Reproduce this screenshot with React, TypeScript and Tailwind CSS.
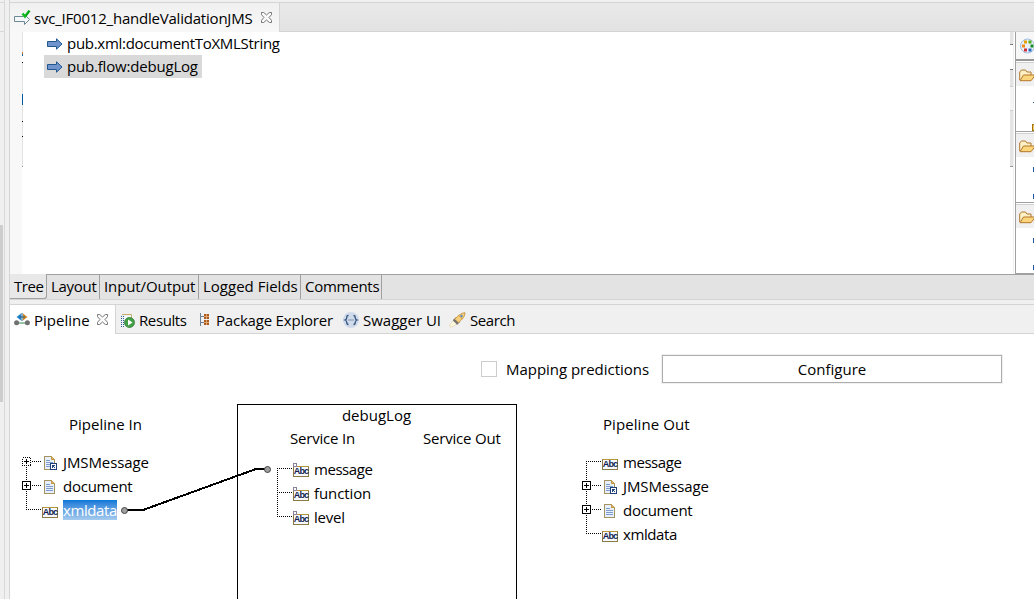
import type { ReactNode } from "react";

function Close() {
  return (
    <svg width="11" height="11" viewBox="0 0 11 11" fill="#fafafa" stroke="#777" strokeWidth="1">
      <path d="M.5 .5h2.2L5.5 3 8.300 .5h2.200v2.200L8 5.500l2.500 2.800v2.200H8.300L5.500 8l-2.800 2.500H.5V8.300L3 5.500.5 2.700z" />
    </svg>
  );
}

function ServiceIcon() {
  return (
    <svg width="17" height="16" viewBox="0 0 17 16">
      <path d="M.5 6.500h9V3.500l6 6-5 5V11.500H.5z" fill="#f4f8fa" stroke="#6f8794" />
      <path d="M8.500 3.500l2.500 3 4.500-6" fill="none" stroke="#0cbf1d" strokeWidth="2.400" />
      <path d="M12 6l3.500-5" stroke="#087a12" strokeWidth=".8" />
    </svg>
  );
}

function Arrow() {
  return (
    <svg width="16" height="12" viewBox="0 0 16 12">
      <path d="M.5 3.500h9V.8L15 6l-5.500 5.200V8.500h-9z" fill="#6f95cc" stroke="#23588f" />
    </svg>
  );
}

function PipelineIcon() {
  return (
    <svg width="16" height="13" viewBox="0 0 16 13">
      <path d="M3 10h10" stroke="#2f8a4b" />
      <path d="M2.500 4L7 .5v7z" fill="#2388cf" />
      <path d="M13.500 4L9 .5v7z" fill="#d38a24" />
      <path d="M8 0v8M5 4h6" stroke="#1c5d8c" />
      <circle cx="2.600" cy="9.800" r="2.500" fill="#707070" />
      <circle cx="13.400" cy="9.800" r="2.500" fill="#707070" />
    </svg>
  );
}

function ResultsIcon() {
  return (
    <svg width="15" height="15" viewBox="0 0 15 15">
      <path d="M2 1.500h9.500v4" fill="none" stroke="#c9ad6c" />
      <path d="M3 3h8v10H3z" fill="#f5f8fc" />
      <path d="M1.500 3v11M3.500 3v11" stroke="#2f5d94" strokeDasharray="1 1" />
      <circle cx="9.500" cy="9.500" r="5" fill="#43a047" stroke="#2d7d32" strokeWidth=".8" />
      <path d="M8 6.500v6l4.500-3z" fill="#fff" />
    </svg>
  );
}

function PackageIcon() {
  return (
    <svg width="10" height="13" viewBox="0 0 10 13" shapeRendering="crispEdges">
      <path d="M.5 0v13M1 3.500h3M1 9.500h3" stroke="#6b7f95" />
      <path d="M4 1h5v5H4zM4 7h5v5H4z" fill="#a85a22" />
      <path d="M6.500 1v5M4 3.500h5M6.500 7v5M4 9.500h5" stroke="#e2a36d" />
    </svg>
  );
}

function SwaggerIcon() {
  return (
    <svg width="16" height="16" viewBox="0 0 16 16">
      <circle cx="8" cy="8" r="8" fill="#cfdaea" />
      <path d="M5.500 3.500c-1.500 0-1.700.6-1.700 2S3.500 7.500 2 8c1.500.5 1.800 1.100 1.800 2.500s.2 2 1.700 2M10.500 3.500c1.500 0 1.700.6 1.700 2s.3 2 1.800 2.500c-1.500.5-1.800 1.100-1.800 2.500s-.2 2-1.700 2" fill="none" stroke="#31517d" strokeWidth="1.300" />
      <path d="M5.500 8h1M7.500 8h1M9.500 8h1" stroke="#31517d" strokeWidth="1.200" />
    </svg>
  );
}

function RocketIcon() {
  return (
    <svg width="17" height="16" viewBox="0 0 17 16">
      <path d="M4 8l3-3 3 1 1 4-3 3z" fill="#8a807a" />
      <path d="M5.500 7.500C9 3.500 12 1 16 .7c0 3.500-2 6-6.500 10z" fill="#f5cf79" stroke="#c08a35" strokeWidth=".8" />
      <path d="M10 3.500l3.500 3.500" stroke="#b87b30" strokeWidth=".7" />
      <circle cx="12.500" cy="4" r="1.200" fill="#5c8bc4" />
      <path d="M5 8l-4 4.500v2.500l3-.5 4-3z" fill="#fffbe0" stroke="#e3cf9a" strokeWidth=".6" />
      <path d="M3.800 8.500L5.500 7l4 4-1.500 1.500z" fill="#77706e" />
    </svg>
  );
}

function PaletteIcon() {
  return (
    <svg width="14" height="16" viewBox="0 0 14 16" className="shrink-0">
      <circle cx="7.500" cy="8" r="7" fill="#eaf1fb" stroke="#9fbbe0" />
      <path d="M4 2.500h3v3H4z" fill="#e3a000" />
      <path d="M8.500 2.500h3v3h-3z" fill="#54ab15" />
      <path d="M2 6.500h3v3H2z" fill="#ee8a17" />
      <path d="M10.500 6.500h3v3h-3z" fill="#178b25" />
      <path d="M4 10.500h3v3H4z" fill="#cf2f35" />
      <path d="M8.500 10.500h3v3h-3z" fill="#2868bc" />
    </svg>
  );
}

function Folder() {
  return (
    <svg width="15" height="13" viewBox="0 0 15 13" className="shrink-0">
      <path d="M.7 11V3L2.500 1h4L8 3h4v3" fill="#fdf0c6" stroke="#b3772b" />
      <path d="M1 11.700L4.500 6h12L12 11.700z" fill="#fad57c" stroke="#b3772b" />
    </svg>
  );
}

function DocIcon({ link = false }: { link?: boolean }) {
  return (
    <svg width="16" height="16" viewBox="0 0 16 16" shapeRendering="crispEdges">
      <path d="M2.500 1.500h7l3 3v10h-10z" fill="#e6effb" stroke="#a3935c" />
      <path d="M9.500 1.500v3h3z" fill="#e0b866" stroke="#c29b4d" />
      <path d="M4 5.500h4M4 7.500h7M4 9.500h7M4 11.500h7" stroke="#7f9bcb" />
      {link && (
        <>
          <path d="M8.500 8.500h6v6h-6z" fill="#fff" stroke="#1f4177" />
          <path d="M10 13v-3h3M10 10l3 3" fill="none" stroke="#1f4177" />
        </>
      )}
    </svg>
  );
}

function StringIcon({ optional = false }: { optional?: boolean }) {
  return (
    <span className="relative flex h-[11px] w-4 items-center justify-center border border-[#8b7a45] border-t-[#b8963e] bg-[#f6f9ff] font-['Liberation_Sans',sans-serif] text-[9px] leading-[9px] font-bold tracking-[-0.8px] text-[#101c50]">
      Abc
      {optional && <span className="absolute -top-1 -left-px size-1 border border-[#8d7fa0] bg-white" />}
    </span>
  );
}

type Item = { name: string; kind: "str" | "opt" | "doc" | "ref"; box?: "dotted" | "solid"; selected?: boolean; text: string };

function Tree({ items }: { items: Item[] }) {
  return (
    <div className="flex flex-col">
      {items.map((item, i) => {
        const first = i === 0;
        const last = i === items.length - 1;
        return (
          <div key={item.name} className="flex h-6 items-center">
            <svg width="20" height="24" viewBox="0 0 20 24" shapeRendering="crispEdges" className="shrink-0">
              <path d={`M4.500 ${first ? 12 : 0}V${last ? 12 : 24}`} stroke="#000" strokeDasharray="1 1" />
              <path d="M4 12.500h16" stroke="#000" strokeDasharray="1 1" />
              {item.box && (
                <>
                  <path d="M.5 8.500h8v8h-8z" fill="#fff" stroke="#000" strokeDasharray={item.box === "dotted" ? "1 1" : undefined} />
                  <path d="M2 12.500h5M4.500 10v5" stroke="#000" />
                </>
              )}
            </svg>
            <span className={item.kind === "doc" || item.kind === "ref" ? "flex w-[21px] pt-[3px]" : "flex w-[21px] pt-[7px]"}>
              {item.kind === "doc" && <DocIcon />}
              {item.kind === "ref" && <DocIcon link />}
              {item.kind === "str" && <StringIcon />}
              {item.kind === "opt" && <StringIcon optional />}
            </span>
            <span className={item.selected ? "mt-0.5 h-5 bg-linear-to-b from-[#0078d7] to-[#a5cbee] leading-5 text-white" : "mt-0.5 h-5 leading-5"}>
              <span className={item.text}>{item.name}</span>
            </span>
          </div>
        );
      })}
    </div>
  );
}

function PaletteGroup({ children }: { children?: ReactNode }) {
  return (
    <div className="h-[71px] pt-px">
      <div className="flex h-[24px] items-center border-t border-[#d0d0d0] bg-[#f0f0f0] pt-0.5 pl-[3px]">
        <Folder />
      </div>
      <div className="flex h-[46px] flex-col items-end border-b border-[#a0a0a0]">{children}</div>
    </div>
  );
}

function Marks() {
  return (
    <>
      <span className="mt-[10px] h-[5px] w-px bg-[#1f5aa0]" />
      <span className="mt-[22px] h-[5px] w-px bg-[#1f5aa0]" />
    </>
  );
}

const footerTabs = [
  { name: "Layout", box: "w-[53px] pl-1", text: "tracking-[-0.3px]" },
  { name: "Input/Output", box: "w-[99px] pl-1", text: "tracking-[-0.1px]" },
  { name: "Logged Fields", box: "w-[102px] pl-1", text: "tracking-[0px]" },
  { name: "Comments", box: "w-[81px] pl-1", text: "tracking-[-0.25px]" },
];

export default function App() {
  return (
    <div className="flex h-[599px] w-[1034px] overflow-hidden bg-[#f0f0f0] font-['Open_Sans',sans-serif] text-[15px] leading-5 whitespace-nowrap text-black">
      <aside className="flex w-[5px] shrink-0 flex-col border-r border-[#d8d8d8]">
        <div className="mt-0.5 h-[30px] border-y border-[#d8d8d8]" />
        <div className="mt-[193px] h-[177px] w-[3px] bg-[#cdcdcd]" />
      </aside>
      <main className="ml-1 flex w-[1025px] shrink-0 flex-col border-l border-[#d4d4d4] pt-0.5">
        <div className="flex h-[30px] shrink-0 border-t border-[#d4d4d4]">
          <div className="flex w-[270px] items-center border-r border-[#d4d4d4] bg-linear-to-b from-[#f0f0f0] to-[#f8f8f8] pl-1">
            <ServiceIcon />
            <span className="ml-[3px] w-[227px]"><span className="tracking-[-0.21px]">svc_IF0012_handleValidationJMS</span></span>
            <Close />
          </div>
          <div className="flex-1 border-b border-[#d4d4d4] bg-linear-to-b from-[#e9e9e9] to-[#e3e3e3]" />
        </div>

        <section className="flex h-[242px] shrink-0 bg-white">
          <div className="flex w-[13px] flex-col items-end bg-linear-to-r from-[#f8f8f8] from-[12px] to-white to-[12px]">
            <span className="h-[20px] w-px bg-[#e2e2e2]" />
            <span className="h-[2px] w-px bg-[#c57c2e]" />
            <span className="h-[2px] w-px bg-[#1d66a5]" />
            <span className="mt-1.5 h-px w-px bg-black" />
            <span className="h-[31px] w-px bg-[#e2e2e2]" />
            <span className="h-[11px] w-px bg-[#005a9e]" />
            <span className="h-4 w-px bg-[#e2e2e2]" />
            <span className="h-px w-px bg-black" />
            <span className="h-3.5 w-px bg-[#e2e2e2]" />
            <span className="h-px w-px bg-black" />
            <span className="h-[29px] w-px bg-[#e2e2e2]" />
            <span className="h-px w-px bg-[#999]" />
          </div>
          <div className="flex-1 pl-[21px]">
            <div className="flex h-[23px] items-center pl-[3px]">
              <Arrow />
              <span className="ml-1 pb-0.5"><span className="tracking-[-0.29px]">pub.xml:documentToXMLString</span></span>
            </div>
            <div className="flex h-[23px] w-[158px] items-center bg-[#d9d9d9] pl-[3px]">
              <Arrow />
              <span className="ml-1 pb-0.5"><span className="tracking-[-0.19px]">pub.flow:debugLog</span></span>
            </div>
          </div>
          <div className="flex w-[3px] flex-col">
            <span className="h-[13px] border-b border-[#777] bg-[#e4e4e4]" />
            <span className="mt-6 h-[18px] border-y border-t-[#777] border-b-[#ccc] bg-[#e4e4e4]" />
            <span className="h-6 border-b border-[#ccc] bg-[#f5f5f5]" />
            <span className="h-14 border-b border-[#999] bg-[#e4e4e4]" />
          </div>
          <div className="mr-px w-px bg-[#f0f0f0]" />
          <div className="w-[19px] overflow-hidden border-l border-[#a0a0a0]">
            <div className="flex h-[29px] items-center border-b-2 border-[#999] bg-[#f7f7f7] pl-1">
              <PaletteIcon />
            </div>
            <PaletteGroup>
              <span className="mt-4 h-px w-px bg-[#1f5aa0]" />
              <span className="mt-[21px] h-[7px] w-0.5 border border-r-0 border-[#a97308] bg-[#e8c766]" />
            </PaletteGroup>
            <PaletteGroup><Marks /></PaletteGroup>
            <PaletteGroup><Marks /></PaletteGroup>
          </div>
        </section>

        <nav className="flex h-[26px] shrink-0 border-b border-[#d4d4d4] bg-[#e3e3e3]">
          <div className="h-[25px] w-[37px] rounded-br-[3px] border-r border-b border-[#a0a0a0] bg-[#e8e8e8] pt-0.5 pl-1">
            <span className="tracking-[-0.4px]">Tree</span>
          </div>
          {footerTabs.map((tab) => (
            <div key={tab.name} className={`h-[25px] border-t border-r border-[#a0a0a0] pt-px ${tab.box}`}>
              <span className={tab.text}>{tab.name}</span>
            </div>
          ))}
          <div className="flex-1 border-t border-[#a0a0a0]" />
        </nav>

        <div className="mt-1 flex h-[30px] shrink-0 border-t border-[#d4d4d4]">
          <div className="flex w-[105px] items-center bg-white pl-1">
            <PipelineIcon />
            <span className="ml-1 w-[63px] pt-px"><span className="tracking-[0px]">Pipeline</span></span>
            <Close />
          </div>
          <div className="flex flex-1 items-center border-b border-l border-[#d4d4d4] pt-px">
            <span className="ml-1 flex w-[19px] pt-0.5"><ResultsIcon /></span>
            <span className="w-[61px]"><span className="tracking-[-0.4px]">Results</span></span>
            <span className="flex w-4"><PackageIcon /></span>
            <span className="w-[127px]"><span className="tracking-[-0.2px]">Package Explorer</span></span>
            <span className="flex w-5"><SwaggerIcon /></span>
            <span className="w-[86px]"><span className="tracking-[0px]">Swagger UI</span></span>
            <span className="flex w-[21px]"><RocketIcon /></span>
            <span className="tracking-[-0.4px]">Search</span>
          </div>
        </div>

        <section className="relative flex flex-1 flex-col bg-white">
          <div className="flex h-[70px] items-center pl-[471px]">
            <span className="size-[16px] border border-[#ccc] bg-white" />
            <span className="ml-[9px] w-[156px]"><span className="tracking-[-0.03px]">Mapping predictions</span></span>
            <button className="h-[28px] w-[340px] border border-[#adadad] bg-white outline outline-[#f0f0f0]">
              <span className="tracking-[0px]">Configure</span>
            </button>
          </div>
          <div className="flex flex-1">
            <div className="w-[227px] pl-3">
              <div className="mt-[10px] pl-[47px]"><span className="tracking-[0px]">Pipeline In</span></div>
              <div className="mt-[15px]">
                <Tree
                  items={[
                    { name: "JMSMessage", kind: "ref", box: "dotted", text: "tracking-[-0.1px]" },
                    { name: "document", kind: "doc", box: "solid", text: "tracking-[-0.25px]" },
                    { name: "xmldata", kind: "str", selected: true, text: "tracking-[-0.4px]" },
                  ]}
                />
              </div>
            </div>
            <div className="h-[220px] w-[280px] border border-black">
              <div className="h-[23px] pr-px text-center"><span className="tracking-[0px]">debugLog</span></div>
              <div className="flex pl-[52px]">
                <span className="w-[133px]"><span className="tracking-[-0.2px]">Service In</span></span>
                <span className="tracking-[-0.2px]">Service Out</span>
              </div>
              <div className="mt-2 pl-[35px]">
                <Tree
                  items={[
                    { name: "message", kind: "opt", text: "tracking-[-0.45px]" },
                    { name: "function", kind: "opt", text: "tracking-[-0.1px]" },
                    { name: "level", kind: "opt", text: "tracking-[-0.2px]" },
                  ]}
                />
              </div>
            </div>
            <div className="pl-[65px]">
              <div className="mt-[10px] pl-[21px]"><span className="tracking-[0.08px]">Pipeline Out</span></div>
              <div className="mt-[15px]">
                <Tree
                  items={[
                    { name: "message", kind: "str", text: "tracking-[-0.45px]" },
                    { name: "JMSMessage", kind: "ref", box: "solid", text: "tracking-[-0.1px]" },
                    { name: "document", kind: "doc", box: "solid", text: "tracking-[-0.25px]" },
                    { name: "xmldata", kind: "str", text: "tracking-[-0.4px]" },
                  ]}
                />
              </div>
            </div>
          </div>
          <svg width="160" height="60" viewBox="0 0 160 60" className="absolute top-[126px] left-[110px]">
            <path d="M4 50h19L136 9h11" fill="none" stroke="#000" strokeWidth="2" shapeRendering="crispEdges" />
            <circle cx="4.500" cy="50.500" r="3" fill="#a0a0a0" stroke="#404040" />
            <circle cx="147.500" cy="9.500" r="3" fill="#a0a0a0" stroke="#404040" />
          </svg>
        </section>
      </main>
    </div>
  );
}
